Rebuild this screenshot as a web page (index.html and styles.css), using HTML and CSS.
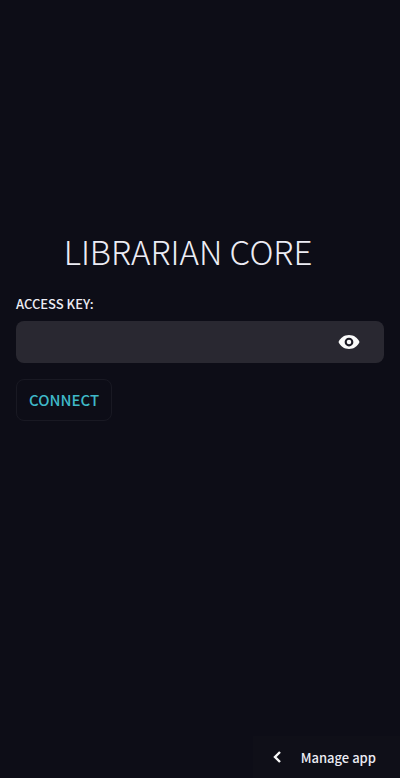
FILE: index.html
```html
<!DOCTYPE html>
<html lang="en">
<head>
    <meta charset="utf-8">
    <title>Librarian Core</title>
    <meta name="viewport" content="width=device-width, initial-scale=1.0">
    <link rel="stylesheet" href="styles.css">
</head>

<body>

    <main class="login">
        <h1 class="title">LIBRARIAN CORE</h1>

        <form class="login-form">
            <label class="field-label" for="accessKey">ACCESS KEY:</label>
            <div class="field">
                <input id="accessKey" class="field-input" type="password">
                <button class="reveal" type="button" aria-label="Show password">
                    <svg viewBox="0 0 24 16" width="22" height="14">
                        <path fill="#fafafa" d="M12 0C6.500 0 2 3.200 0 8c2 4.800 6.500 8 12 8s10-3.200 12-8C22 3.200 17.500 0 12 0z"/>
                        <circle cx="12" cy="8" r="5" fill="#1b1a24"/>
                        <circle cx="12" cy="8" r="2.600" fill="#fafafa"/>
                    </svg>
                </button>
            </div>
            <button class="connect" type="submit">CONNECT</button>
        </form>
    </main>

    <footer class="footer">
        <button class="manage" type="button">
            <svg viewBox="0 0 8 12" width="8" height="12">
                <path fill="none" stroke="#fafafa" stroke-width="2.400" d="M7 1L2 6l5 5"/>
            </svg>
            <span>Manage app</span>
        </button>
    </footer>

</body>
</html>
```
FILE: styles.css
```css
body {
    margin: 0;
    min-height: 100vh;
    display: flex;
    flex-direction: column;
    background-color: #0d0d17;
    color: #ececf4;
    font-family: "Noto Sans CJK SC", "Noto Sans", sans-serif;
}

button {
    padding: 0;
    border: 0;
    background: none;
    color: inherit;
    font-family: inherit;
    cursor: pointer;
}

svg {
    display: block;
}

.login {
    flex: 1;
    padding: 231px 16px 0;
}

.title {
    margin: 0;
    padding-right: 24px;
    font-size: 33px;
    font-weight: 300;
    line-height: 40px;
    text-align: center;
    color: #ececf4;
}

.login-form {
    display: flex;
    flex-direction: column;
    align-items: flex-start;
    margin-top: 21px;
}

.field-label {
    font-size: 13px;
    font-weight: 500;
    line-height: 24px;
}

.field {
    display: flex;
    align-self: stretch;
    height: 42px;
    margin-top: 5px;
    border-radius: 8px;
    background-color: #292831;
}

.field-input {
    flex: 1;
    min-width: 0;
    padding: 0 12px;
    border: 0;
    outline: 0;
    background: none;
    color: inherit;
    font: inherit;
}

.reveal {
    padding: 0 24px;
}

.connect {
    height: 42px;
    margin-top: 16px;
    padding: 0 12px 2px;
    border: 1px solid #191923;
    border-radius: 8px;
    font-size: 15px;
    font-weight: 500;
    color: #3fb8c8;
}

.footer {
    display: flex;
    justify-content: flex-end;
}

.manage {
    display: flex;
    align-items: center;
    gap: 20px;
    height: 42px;
    padding: 0 24px 0 20px;
    background-color: #0f0f18;
    font-size: 13px;
    font-weight: 500;
}
```
